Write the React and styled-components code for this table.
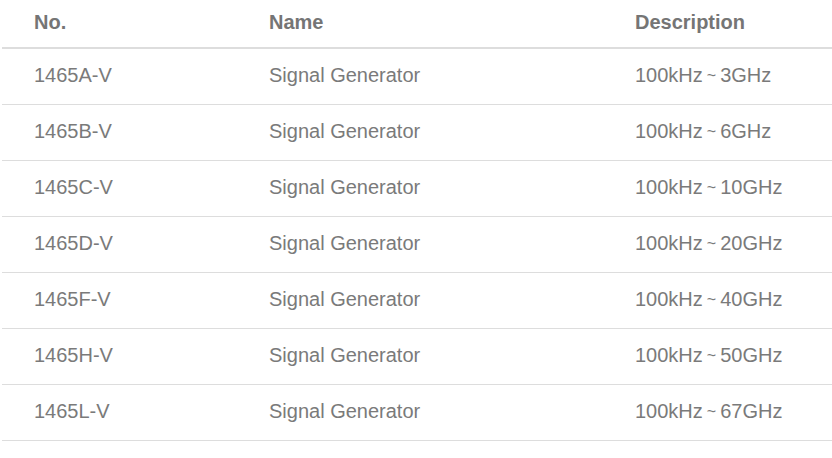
import React from "react";
import styled, { createGlobalStyle } from "styled-components";

const GlobalStyle = createGlobalStyle`
  html, body {
    margin: 0;
    padding: 0;
    background: #fff;
  }
  body {
    font-family: "Liberation Sans", Arial, sans-serif;
  }
`;

const Wrapper = styled.div`
  width: 830px;
  margin-left: 2px;
`;

const Table = styled.table`
  width: 100%;
  border-collapse: collapse;
  table-layout: fixed;
  font-size: 20px;
  color: #7a7a7a;
`;

const HeadCell = styled.th`
  box-sizing: border-box;
  height: 48px;
  padding: 0 0 3px 32px;
  text-align: left;
  font-weight: bold;
  color: #757575;
  border-bottom: 2px solid #dddddd;
  vertical-align: middle;
  width: ${(p) => p.$width}px;
`;

const Row = styled.tr`
  border-bottom: 1px solid #dddddd;
`;

const Cell = styled.td`
  box-sizing: border-box;
  height: 56px;
  padding: 0 0 2px 32px;
  vertical-align: middle;
  white-space: nowrap;
`;

const Tilde = styled.span`
  font-size: 16px;
  margin: 0 4px;
  position: relative;
  top: -1px;
`;

const items = [
  { no: "1465A-V", range: "3GHz" },
  { no: "1465B-V", range: "6GHz" },
  { no: "1465C-V", range: "10GHz" },
  { no: "1465D-V", range: "20GHz" },
  { no: "1465F-V", range: "40GHz" },
  { no: "1465H-V", range: "50GHz" },
  { no: "1465L-V", range: "67GHz" },
];

const App = () => {
  return (
    <Wrapper>
      <GlobalStyle />
      <Table>
        <thead>
          <tr>
            <HeadCell $width={235}>No.</HeadCell>
            <HeadCell $width={366}>Name</HeadCell>
            <HeadCell $width={229}>Description</HeadCell>
          </tr>
        </thead>
        <tbody>
          {items.map((item) => (
            <Row key={item.no}>
              <Cell>{item.no}</Cell>
              <Cell>Signal Generator</Cell>
              <Cell>
                100kHz<Tilde>~</Tilde>{item.range}
              </Cell>
            </Row>
          ))}
        </tbody>
      </Table>
    </Wrapper>
  );
};

export default App;
